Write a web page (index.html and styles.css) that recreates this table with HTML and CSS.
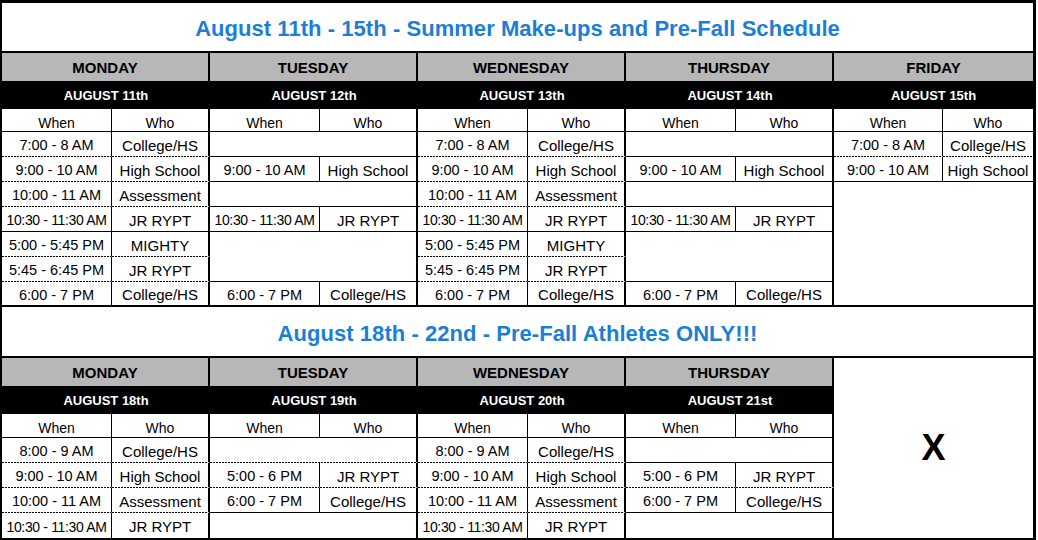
FILE: index.html
```html
<!DOCTYPE html>
<html lang="en">
<head>
<meta charset="utf-8">
<title>Schedule</title>
<link rel="stylesheet" href="styles.css">
</head>
<body>
<div class="sheet">
  <div class="title t1">August 11th - 15th - Summer Make-ups and Pre-Fall Schedule</div>
  <div class="week wk1">
    <div class="cell day">MONDAY</div>
    <div class="cell day">TUESDAY</div>
    <div class="cell day">WEDNESDAY</div>
    <div class="cell day">THURSDAY</div>
    <div class="cell day last">FRIDAY</div>

    <div class="cell date">AUGUST 11th</div>
    <div class="cell date">AUGUST 12th</div>
    <div class="cell date">AUGUST 13th</div>
    <div class="cell date">AUGUST 14th</div>
    <div class="cell date">AUGUST 15th</div>

    <div class="cell hd w">When</div><div class="cell hd o">Who</div>
    <div class="cell hd w">When</div><div class="cell hd o">Who</div>
    <div class="cell hd w">When</div><div class="cell hd o">Who</div>
    <div class="cell hd w">When</div><div class="cell hd o">Who</div>
    <div class="cell hd w">When</div><div class="cell hd o last">Who</div>

    <!-- row 1 -->
    <div class="cell w dl">7:00 - 8 AM</div><div class="cell o dl">College/HS</div>
    <div class="cell e sl"></div>
    <div class="cell w dl">7:00 - 8 AM</div><div class="cell o dl">College/HS</div>
    <div class="cell e sl"></div>
    <div class="cell w dl">7:00 - 8 AM</div><div class="cell o last dl">College/HS</div>

    <!-- row 2 -->
    <div class="cell w dl">9:00 - 10 AM</div><div class="cell o dl">High School</div>
    <div class="cell w sl">9:00 - 10 AM</div><div class="cell o sl">High School</div>
    <div class="cell w dl">9:00 - 10 AM</div><div class="cell o dl">High School</div>
    <div class="cell w sl">9:00 - 10 AM</div><div class="cell o sl">High School</div>
    <div class="cell w sl">9:00 - 10 AM</div><div class="cell o last sl">High School</div>

    <!-- row 3 -->
    <div class="cell w dl">10:00 - 11 AM</div><div class="cell o dl">Assessment</div>
    <div class="cell e sl"></div>
    <div class="cell w dl">10:00 - 11 AM</div><div class="cell o dl">Assessment</div>
    <div class="cell e sl"></div>
    <div class="cell e last tl r5"></div>

    <!-- row 4 -->
    <div class="cell w sl sm">10:30 - 11:30 AM</div><div class="cell o sl">JR RYPT</div>
    <div class="cell w sl sm">10:30 - 11:30 AM</div><div class="cell o sl">JR RYPT</div>
    <div class="cell w sl sm">10:30 - 11:30 AM</div><div class="cell o sl">JR RYPT</div>
    <div class="cell w sl sm">10:30 - 11:30 AM</div><div class="cell o sl">JR RYPT</div>

    <!-- row 5 -->
    <div class="cell w dl">5:00 - 5:45 PM</div><div class="cell o dl">MIGHTY</div>
    <div class="cell e sl r2"></div>
    <div class="cell w dl">5:00 - 5:45 PM</div><div class="cell o dl">MIGHTY</div>
    <div class="cell e sl r2"></div>

    <!-- row 6 -->
    <div class="cell w dl">5:45 - 6:45 PM</div><div class="cell o dl">JR RYPT</div>
    <div class="cell w dl">5:45 - 6:45 PM</div><div class="cell o dl">JR RYPT</div>

    <!-- row 7 -->
    <div class="cell w tl">6:00 - 7 PM</div><div class="cell o tl">College/HS</div>
    <div class="cell w tl">6:00 - 7 PM</div><div class="cell o tl">College/HS</div>
    <div class="cell w tl">6:00 - 7 PM</div><div class="cell o tl">College/HS</div>
    <div class="cell w tl">6:00 - 7 PM</div><div class="cell o tl">College/HS</div>
  </div>

  <div class="title t2">August 18th - 22nd - Pre-Fall Athletes ONLY!!!</div>
  <div class="week wk2">
    <div class="cell day">MONDAY</div>
    <div class="cell day">TUESDAY</div>
    <div class="cell day">WEDNESDAY</div>
    <div class="cell day">THURSDAY</div>
    <div class="cell e last r7 x">X</div>

    <div class="cell date">AUGUST 18th</div>
    <div class="cell date">AUGUST 19th</div>
    <div class="cell date">AUGUST 20th</div>
    <div class="cell date">AUGUST 21st</div>

    <div class="cell hd w">When</div><div class="cell hd o">Who</div>
    <div class="cell hd w">When</div><div class="cell hd o">Who</div>
    <div class="cell hd w">When</div><div class="cell hd o">Who</div>
    <div class="cell hd w">When</div><div class="cell hd o">Who</div>

    <!-- row 1 -->
    <div class="cell w dl">8:00 - 9 AM</div><div class="cell o dl">College/HS</div>
    <div class="cell e dl"></div>
    <div class="cell w dl">8:00 - 9 AM</div><div class="cell o dl">College/HS</div>
    <div class="cell e sl"></div>

    <!-- row 2 -->
    <div class="cell w dl">9:00 - 10 AM</div><div class="cell o dl">High School</div>
    <div class="cell w dl">5:00 - 6 PM</div><div class="cell o dl">JR RYPT</div>
    <div class="cell w dl">9:00 - 10 AM</div><div class="cell o dl">High School</div>
    <div class="cell w dl">5:00 - 6 PM</div><div class="cell o dl">JR RYPT</div>

    <!-- row 3 -->
    <div class="cell w dl">10:00 - 11 AM</div><div class="cell o dl">Assessment</div>
    <div class="cell w sl">6:00 - 7 PM</div><div class="cell o sl">College/HS</div>
    <div class="cell w dl">10:00 - 11 AM</div><div class="cell o dl">Assessment</div>
    <div class="cell w sl">6:00 - 7 PM</div><div class="cell o sl">College/HS</div>

    <!-- row 4 -->
    <div class="cell w sm">10:30 - 11:30 AM</div><div class="cell o">JR RYPT</div>
    <div class="cell e"></div>
    <div class="cell w sm">10:30 - 11:30 AM</div><div class="cell o">JR RYPT</div>
    <div class="cell e"></div>
  </div>
</div>
</body>
</html>
```
FILE: styles.css
```css
* { box-sizing: border-box; }
html, body { margin: 0; padding: 0; background: #fff; }
body {
  font-family: "Liberation Sans", Arial, sans-serif;
  color: #000;
}
.sheet {
  width: 1036px;
  border-style: solid;
  border-color: #000;
  border-width: 3px 3px 2px 2px;
}
.title {
  display: flex;
  align-items: center;
  justify-content: center;
  border-bottom: 2px solid #000;
  color: #1b7fd4;
  font-weight: bold;
  font-size: 22px;
  letter-spacing: 0.05px;
}
.t1 { height: 50px; padding-top: 3px; }
.t2 { height: 51px; padding-top: 4px; }
.week {
  display: grid;
  grid-template-columns: 110px 98px 110px 98px 110px 98px 110px 98px 109px 90px;
}
.wk1 { grid-template-rows: 28px 28px 23px repeat(7, 25px); }
.wk2 { grid-template-rows: 28px 28px 24px repeat(4, 25px); }
.cell {
  display: flex;
  align-items: center;
  justify-content: center;
  font-size: 14.5px;
  white-space: nowrap;
  overflow: hidden;
  padding-top: 2px;
}
.o { font-size: 15px; }
.day {
  grid-column: span 2;
  background: #b7b7b7;
  border-right: 2px solid #000;
  font-weight: bold;
  font-size: 15px;
  padding-top: 1px;
}
.date {
  grid-column: span 2;
  background: #000;
  color: #fff;
  font-weight: bold;
  font-size: 13px;
  padding-top: 1px;
}
.hd { border-bottom: 1px solid #000; font-size: 14px; padding-top: 5px; }
.w { border-right: 1px solid #000; }
.o { border-right: 2px solid #000; }
.e { grid-column: span 2; border-right: 2px solid #000; }
.last { border-right: 0; }
.r2 { grid-row: span 2; }
.r5 { grid-row: span 5; }
.r7 { grid-row: span 7; }
.dl {
  border-bottom: 1px solid transparent;
  background: linear-gradient(to right, #000 2px, transparent 2px) left bottom / 3px 1px repeat-x border-box;
}
.sl { border-bottom: 1px solid #000; }
.tl { border-bottom: 2px solid #000; }
.sm { font-size: 14px; letter-spacing: -0.35px; }
.x { font-size: 36px; font-weight: bold; padding-top: 0; }
```
